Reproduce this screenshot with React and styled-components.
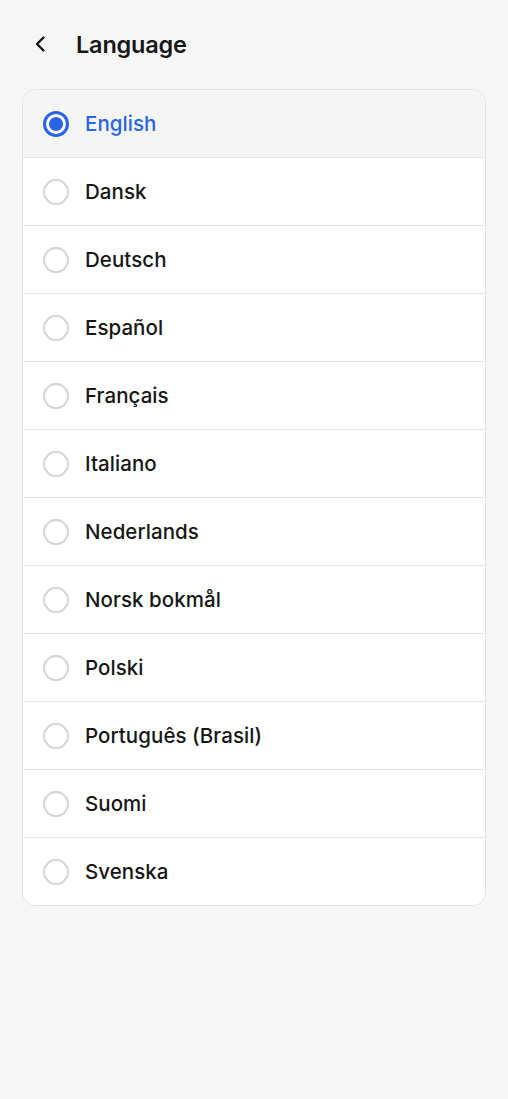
import React, { useState } from "react";
import styled, { createGlobalStyle } from "styled-components";

const Global = createGlobalStyle`
  html, body { margin: 0; padding: 0; background: #f6f6f6; }
  body { font-family: Inter, "Noto Sans", sans-serif; -webkit-font-smoothing: antialiased; }
  * { box-sizing: border-box; }
`;

const Page = styled.div`
  min-height: 1099px;
  background: #f6f6f6;
  padding: 0 22px;
`;

const Header = styled.header`
  height: 89px;
  display: flex;
  align-items: center;
  gap: 23px;
  padding-left: 7px;
  padding-bottom: 1px;
`;

const BackButton = styled.button`
  width: 24px;
  height: 24px;
  padding: 0;
  border: 0;
  background: none;
  display: flex;
  align-items: center;
  justify-content: center;
  color: #151515;
  cursor: pointer;
`;

const Title = styled.h1`
  margin: 0;
  font-size: 23.5px;
  font-weight: 600;
  color: #171717;
  letter-spacing: -0.2px;
`;

const Card = styled.ul`
  list-style: none;
  margin: 0;
  padding: 0;
  background: #fff;
  border: 1px solid #e3e3e3;
  border-radius: 14px;
  overflow: hidden;
`;

const Row = styled.li`
  height: ${(p) => (p.$first ? "67px" : "68px")};
  display: flex;
  align-items: center;
  gap: 16px;
  padding-left: 20px;
  background: ${(p) => (p.$selected ? "#f5f5f5" : "#fff")};
  border-top: ${(p) => (p.$first ? "0" : "1px solid #e5e5e5")};
  cursor: pointer;
`;

const Radio = styled.span`
  width: 26px;
  height: 26px;
  border-radius: 50%;
  flex: none;
  border: ${(p) => (p.$on ? "3px solid #2864e4" : "2px solid #d4d4d4")};
  display: flex;
  align-items: center;
  justify-content: center;
  background: #fff;
  &::after {
    content: "";
    display: ${(p) => (p.$on ? "block" : "none")};
    width: 14px;
    height: 14px;
    border-radius: 50%;
    background: #2864e4;
  }
`;

const Label = styled.span`
  font-size: 20.5px;
  font-weight: 500;
  color: ${(p) => (p.$on ? "#2864e4" : "#161616")};
  letter-spacing: 0.05px;
`;

const languages = [
  "English",
  "Dansk",
  "Deutsch",
  "Español",
  "Français",
  "Italiano",
  "Nederlands",
  "Norsk bokmål",
  "Polski",
  "Português (Brasil)",
  "Suomi",
  "Svenska",
];

export default function App() {
  const [sel, setSel] = useState("English");
  return (
    <>
      <Global />
      <Page>
        <Header>
          <BackButton aria-label="Back">
            <svg width="24" height="24" viewBox="0 0 24 24" fill="none">
              <path
                d="M14.5 5.5L8 12L14.5 18.5"
                stroke="currentColor"
                strokeWidth="2.4"
                strokeLinecap="round"
                strokeLinejoin="round"
              />
            </svg>
          </BackButton>
          <Title>Language</Title>
        </Header>
        <Card>
          {languages.map((l, i) => (
            <Row
              key={l}
              $first={i === 0}
              $selected={l === sel}
              onClick={() => setSel(l)}
            >
              <Radio $on={l === sel} />
              <Label $on={l === sel}>{l}</Label>
            </Row>
          ))}
        </Card>
      </Page>
    </>
  );
}
